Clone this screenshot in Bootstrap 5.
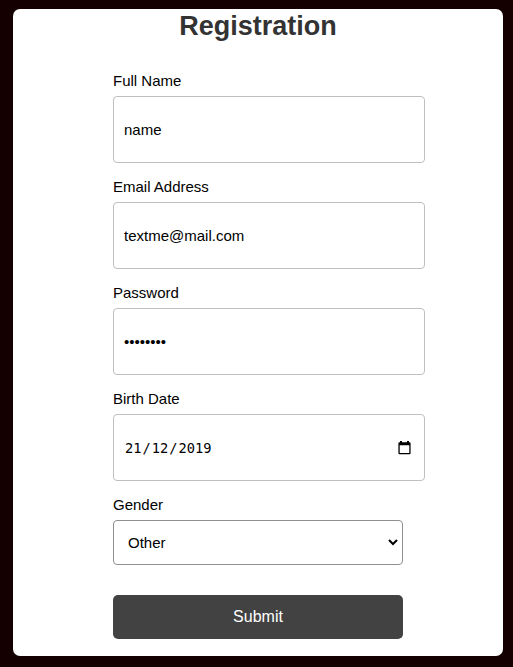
<!DOCTYPE html>
<html lang="en">
<head>
<meta charset="utf-8">
<meta name="viewport" content="width=device-width, initial-scale=1">
<title>Registration</title>
<link href="https://cdn.jsdelivr.net/npm/bootstrap@5.3.0/dist/css/bootstrap.min.css" rel="stylesheet">
<style>
body { background: #140000; font-family: "Liberation Sans", Arial, sans-serif; color: #000; height: 667px; overflow: hidden; }
.panel { margin: 9px 10px 0 13px; height: 647px; border-radius: 7px; }
.panel-title { font-size: 27px; line-height: 34px; color: #333; }
.reg-form { width: 312px; margin: 28px 0 0 100px; }
.field { height: 106px; }
.reg-form .form-label { font-size: 15px; line-height: 20px; margin-bottom: 5px; }
.reg-form .form-control { height: 67px; padding: 0 10px; font-size: 15px; color: #000; border: 1px solid #bfbfbf; border-radius: 4px; }
.reg-form .date-box { padding: 0 9px 0 11px; }
.reg-form .date-text { font-family: "DejaVu Sans Mono", monospace; font-size: 13.7px; padding-top: 2px; }
.date-text .sep { padding: 0 1px; }
.reg-form .narrow { width: 290px; }
.reg-form .form-select { height: 45px; padding: 2px 14px 0; font-size: 15px; color: #000; border: 1px solid #8f8f8f; border-radius: 4px; background-image: none; }
.chevron { right: 4px; top: 18px; pointer-events: none; }
.reg-form .btn-submit { height: 44px; margin-top: 30px; background: #424242; color: #fff; font-size: 16px; border: 0; border-radius: 5px; padding: 0; }
</style>
<script src="https://cdn.jsdelivr.net/npm/bootstrap@5.3.0/dist/js/bootstrap.bundle.min.js"></script>
</head>
<body>
<main class="panel bg-white overflow-hidden">
  <h1 class="panel-title fw-bold text-center mb-0">Registration</h1>
  <form class="reg-form">
    <div class="field">
      <label class="form-label d-block" for="name">Full Name</label>
      <input class="form-control" id="name" type="text" value="name">
    </div>
    <div class="field">
      <label class="form-label d-block" for="email">Email Address</label>
      <input class="form-control" id="email" type="email" value="textme@mail.com">
    </div>
    <div class="field">
      <label class="form-label d-block" for="password">Password</label>
      <input class="form-control" id="password" type="password" value="password">
    </div>
    <div class="field">
      <label class="form-label d-block">Birth Date</label>
      <div class="form-control date-box d-flex align-items-center justify-content-between">
        <div class="date-text">21<span class="sep">/</span>12<span class="sep">/</span>2019</div>
        <svg class="me-1" width="13" height="14" viewBox="0 0 13 14"><path d="M2 0h2v1.200h5V0h2v1.200h.6q1 0 1 1v10q0 1-1 1H1.400q-1 0-1-1v-10q0-1 1-1H2zM1.700 4.300v7.700h9.600V4.300z" fill="#000" fill-rule="evenodd"/></svg>
      </div>
    </div>
    <label class="form-label d-block" for="gender">Gender</label>
    <div class="narrow position-relative">
      <select class="form-select" id="gender"><option>Other</option></select>
      <svg class="chevron position-absolute" width="12" height="8" viewBox="0 0 12 8"><path d="M2 2l4 4 4-4" fill="none" stroke="#000" stroke-width="2"/></svg>
    </div>
    <button class="btn btn-submit narrow d-block" type="button">Submit</button>
  </form>
</main>
</body>
</html>
